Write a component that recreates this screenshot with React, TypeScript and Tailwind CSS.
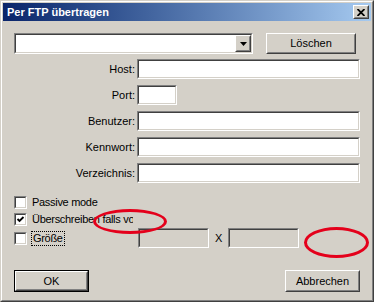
import React from "react";

function Sunken({ className = "", disabled = false, children }: { className?: string; disabled?: boolean; children?: React.ReactNode }) {
  return (
    <div className={`border border-t-[#808080] border-l-[#808080] border-b-white border-r-white ${className}`}>
      <div
        className={
          disabled
            ? "h-full w-full border border-t-[#404040] border-l-[#404040] border-b-[#d4d0c8] border-r-[#d4d0c8] bg-[#d4d0c8] flex"
            : "h-full w-full border border-t-[#404040] border-l-[#404040] border-b-[#d4d0c8] border-r-[#d4d0c8] bg-white flex"
        }
      >
        {children}
      </div>
    </div>
  );
}

function Raised({ className = "", children }: { className?: string; children?: React.ReactNode }) {
  return (
    <div className={`border border-t-white border-l-white border-b-[#404040] border-r-[#404040] bg-[#d4d0c8] ${className}`}>
      <div className="h-full w-full border border-t-[#d4d0c8] border-l-[#d4d0c8] border-b-[#808080] border-r-[#808080] flex items-center justify-center">
        {children}
      </div>
    </div>
  );
}

function Checkbox({ checked = false }: { checked?: boolean }) {
  return (
    <Sunken className="w-[13px] h-[13px] shrink-0">
      {checked && (
        <svg width="9" height="9" viewBox="0 0 9 9" className="block">
          <path d="M1.5 4 L3.5 6 L7.5 2" stroke="#000" strokeWidth="1.8" fill="none" />
        </svg>
      )}
    </Sunken>
  );
}

function FormRow({ label, width }: { label: string; width: string }) {
  return (
    <div className="flex items-center h-[20px]">
      <div className="w-[121px] text-right leading-none">{label}</div>
      <Sunken className={`ml-[2px] h-[20px] ${width}`} />
    </div>
  );
}

export default function App() {
  return (
    <div className="relative w-[374px] h-[302px] bg-[#d4d0c8] text-[11px] text-black [font-family:'Liberation_Sans',Arial,sans-serif] border border-t-[#d4d0c8] border-l-[#d4d0c8] border-b-[#404040] border-r-[#404040]">
      <div className="h-full w-full border border-t-white border-l-white border-b-[#808080] border-r-[#808080] p-[1px] flex flex-col">
        {/* Title bar */}
        <div className="h-[18px] shrink-0 flex items-center justify-between pl-[4px] pr-[2px] bg-gradient-to-r from-[#0a246a] to-[#a6caf0]">
          <span className="text-white font-bold text-[11px] leading-none">Per FTP übertragen</span>
          <Raised className="w-[16px] h-[14px]">
            <svg width="8" height="7" viewBox="0 0 8 7" className="block">
              <path d="M0.5 0 L7.5 7 M7.5 0 L0.5 7" stroke="#000" strokeWidth="1.8" />
            </svg>
          </Raised>
        </div>

        {/* Body */}
        <div className="flex flex-col px-[11px] pt-[12px]">
          <div className="flex h-[21px]">
            <Sunken className="w-[239px] h-[21px]">
              <div className="flex-1" />
              <Raised className="w-[16px] h-full">
                <svg width="7" height="4" viewBox="0 0 7 4" className="block">
                  <path d="M0 0 H7 L3.5 4 Z" fill="#000" />
                </svg>
              </Raised>
            </Sunken>
            <Raised className="ml-[13px] w-[90px] h-[21px]">
              <span className="leading-none">Löschen</span>
            </Raised>
          </div>

          <div className="flex flex-col gap-[6px] mt-[5px]">
            <FormRow label="Host:" width="w-[223px]" />
            <FormRow label="Port:" width="w-[40px]" />
            <FormRow label="Benutzer:" width="w-[223px]" />
            <FormRow label="Kennwort:" width="w-[223px]" />
            <FormRow label="Verzeichnis:" width="w-[223px]" />
          </div>

          <div className="flex flex-col mt-[10px] tracking-[-0.3px]">
            <div className="flex items-center h-[18px]">
              <Checkbox />
              <span className="ml-[5px] leading-none">Passive mode</span>
            </div>
            <div className="flex items-center h-[17px]">
              <Checkbox checked />
              <span className="ml-[5px] w-[101px] overflow-hidden whitespace-nowrap leading-none">Überschreiben falls vorhanden</span>
            </div>
            <div className="flex items-center h-[20px]">
              <div className="w-[124px] flex items-center">
                <Checkbox />
                <span className="ml-[4px] px-[1px] py-[1px] border border-dotted border-black leading-none">Größe</span>
              </div>
              <Sunken disabled className="w-[71px] h-[20px]" />
              <span className="w-[19px] text-center leading-none">X</span>
              <Sunken disabled className="w-[71px] h-[20px]" />
            </div>
          </div>

          <div className="flex mt-[22px]">
            <div className="border border-black w-[75px] h-[22px]">
              <Raised className="w-full h-full">
                <span className="leading-none">OK</span>
              </Raised>
            </div>
            <Raised className="ml-[196px] w-[75px] h-[22px]">
              <span className="leading-none">Abbrechen</span>
            </Raised>
          </div>
        </div>
      </div>

      {/* Red annotation ellipses */}
      <div className="absolute left-[92px] top-[208px] w-[74px] h-[25px] rounded-[50%] border-[3px] border-[#e4001b]" />
      <div className="absolute left-[303px] top-[226px] w-[65px] h-[31px] rounded-[50%] border-[3px] border-[#e4001b]" />
    </div>
  );
}
